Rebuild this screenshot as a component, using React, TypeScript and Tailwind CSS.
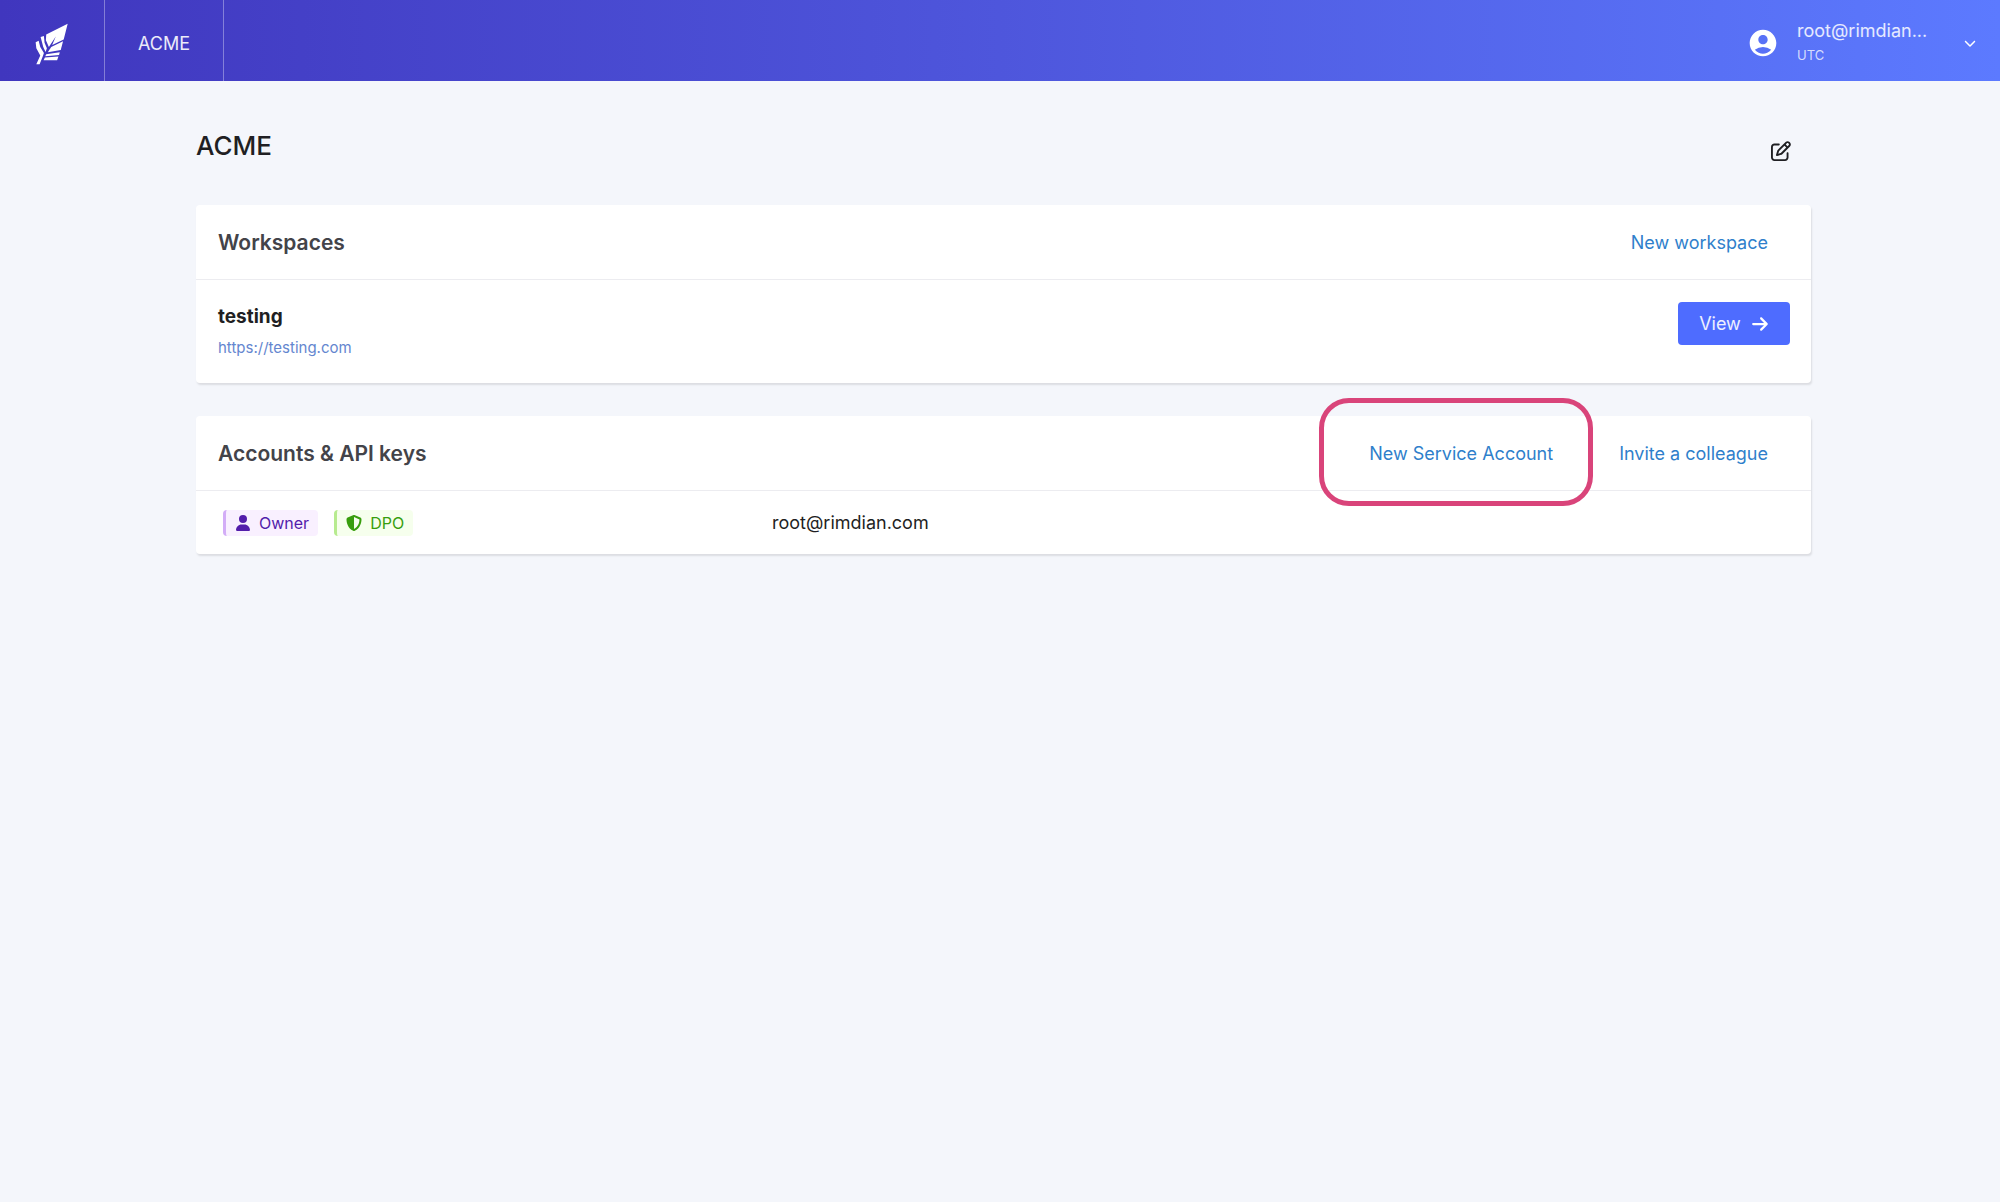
import type { ReactNode } from "react";
import { FaArrowRight, FaChevronDown, FaRegPenToSquare, FaShieldHalved, FaUser } from "react-icons/fa6";
import { MdAccountCircle } from "react-icons/md";

interface Workspace {
  name: string;
  url: string;
}

interface Account {
  email: string;
  roles: string[];
}

const workspaces: Workspace[] = [{ name: "testing", url: "https://testing.com" }];
const accounts: Account[] = [{ email: "root@rimdian.com", roles: ["owner", "dpo"] }];

const Logo = () => (
  <svg viewBox="105 67 100 126" className="h-[42px] w-[33px]" fill="#fff" aria-hidden="true">
    <path d="M204 69 L139 101 L138 119 L147 139 L168 107 L157 133 L192 116 Z" />
    <path d="M190 122 L154 139 L144 155 L183 148 Z" />
    <path d="M122 109 L132 106 L134 126 L141 143 L137 154 L130 139 Z" />
    <path d="M107 125 L116 120 L121 139 L132 157 L129 166 L119 191 L109 191 L121 165 L109 143 Z" />
    <path d="M139 161 L180 155 L178 163 L136 167 Z" />
    <path d="M135 171 L176 168 L172 179 L131 179 Z" />
  </svg>
);

const RoleTag = ({ role }: { role: string }) => {
  if (role === "owner") {
    return (
      <span className="flex h-[26px] items-center gap-2 rounded border-l-[3px] border-[#d3adf7] bg-[#f9f0ff] px-[9px] text-base text-[#531dab]">
        <FaUser className="size-4" />
        Owner
      </span>
    );
  }
  return (
    <span className="flex h-[26px] items-center gap-2 rounded border-l-[3px] border-[#b7eb8f] bg-[#f6ffed] px-[9px] text-base text-[#389e0d]">
      <FaShieldHalved className="size-4" />
      DPO
    </span>
  );
};

const Card = ({ title, actions, children }: { title: string; actions: ReactNode; children: ReactNode }) => (
  <section className="rounded bg-white shadow-[1px_2px_2px_rgba(0,0,0,0.10)]">
    <div className="flex h-[75px] items-center justify-between border-b border-[#ececf0] pt-px pr-[43px] pl-[22px]">
      <h2 className="text-[21px] font-semibold text-[#434349]">{title}</h2>
      <div className="flex items-center gap-[66px] text-lg text-[#2f7fcb]">{actions}</div>
    </div>
    {children}
  </section>
);

export default function App() {
  return (
    <div className="min-h-screen bg-[#f4f6fb] font-['Inter',sans-serif] text-[#1f1f23]">
      <header className="flex h-[81px] items-stretch justify-between bg-linear-to-r from-[#4036be] via-[#4e56dc] to-[#5c7aff] text-white">
        <div className="flex">
          <a href="#" aria-label="Home" className="flex w-[105px] items-center border-r border-white/35 pt-1.5 pl-[35px]">
            <Logo />
          </a>
          <a href="#" className="flex w-[119px] items-center justify-center border-r border-white/35 pt-1.5 text-lg text-white/90">
            ACME
          </a>
        </div>
        <button type="button" className="flex items-center pt-1 pr-6 text-left">
          <MdAccountCircle className="mr-[18px] size-8" />
          <span className="w-[167px]">
            <span className="block text-lg leading-6 text-white/85">root@rimdian...</span>
            <span className="block text-[13px] leading-6 text-white/75">UTC</span>
          </span>
          <FaChevronDown className="size-3" />
        </button>
      </header>

      <main className="mr-[189px] ml-[196px] pt-10">
        <div className="mb-8 flex h-[52px] items-center justify-between pr-5">
          <h1 className="pb-1 text-[26px] font-medium">ACME</h1>
          <button type="button" aria-label="Edit" className="pt-2">
            <FaRegPenToSquare className="size-5" />
          </button>
        </div>

        <div className="flex flex-col gap-[33px]">
          <Card title="Workspaces" actions={<a href="#">New workspace</a>}>
            {workspaces.map((w) => (
              <div key={w.name} className="flex h-[103px] items-start justify-between pt-[22px] pr-[21px] pl-[22px]">
                <div>
                  <h3 className="text-[19px] leading-[30px] font-bold">{w.name}</h3>
                  <a href={w.url} className="block text-[15px] leading-8 text-[#6486cf]">
                    {w.url}
                  </a>
                </div>
                <button
                  type="button"
                  className="flex h-[43px] w-28 items-center justify-center gap-2.5 rounded bg-[#4e6cff] text-lg text-white/90"
                >
                  View
                  <FaArrowRight className="size-[18px] text-white" />
                </button>
              </div>
            ))}
          </Card>

          <Card
            title="Accounts & API keys"
            actions={
              <>
                <a href="#" className="relative">
                  New Service Account
                  <span className="absolute -top-[42px] -right-10 -bottom-[38px] -left-[50px] rounded-[30px] border-[5px] border-[#d9447a]" />
                </a>
                <a href="#">Invite a colleague</a>
              </>
            }
          >
            <table className="w-full table-fixed">
              <tbody>
                {accounts.map((a) => (
                  <tr key={a.email} className="h-[63px]">
                    <td className="w-[576px] pl-[27px]">
                      <div className="flex gap-4">
                        {a.roles.map((role) => (
                          <RoleTag key={role} role={role} />
                        ))}
                      </div>
                    </td>
                    <td className="text-lg">{a.email}</td>
                  </tr>
                ))}
              </tbody>
            </table>
          </Card>
        </div>
      </main>
    </div>
  );
}
